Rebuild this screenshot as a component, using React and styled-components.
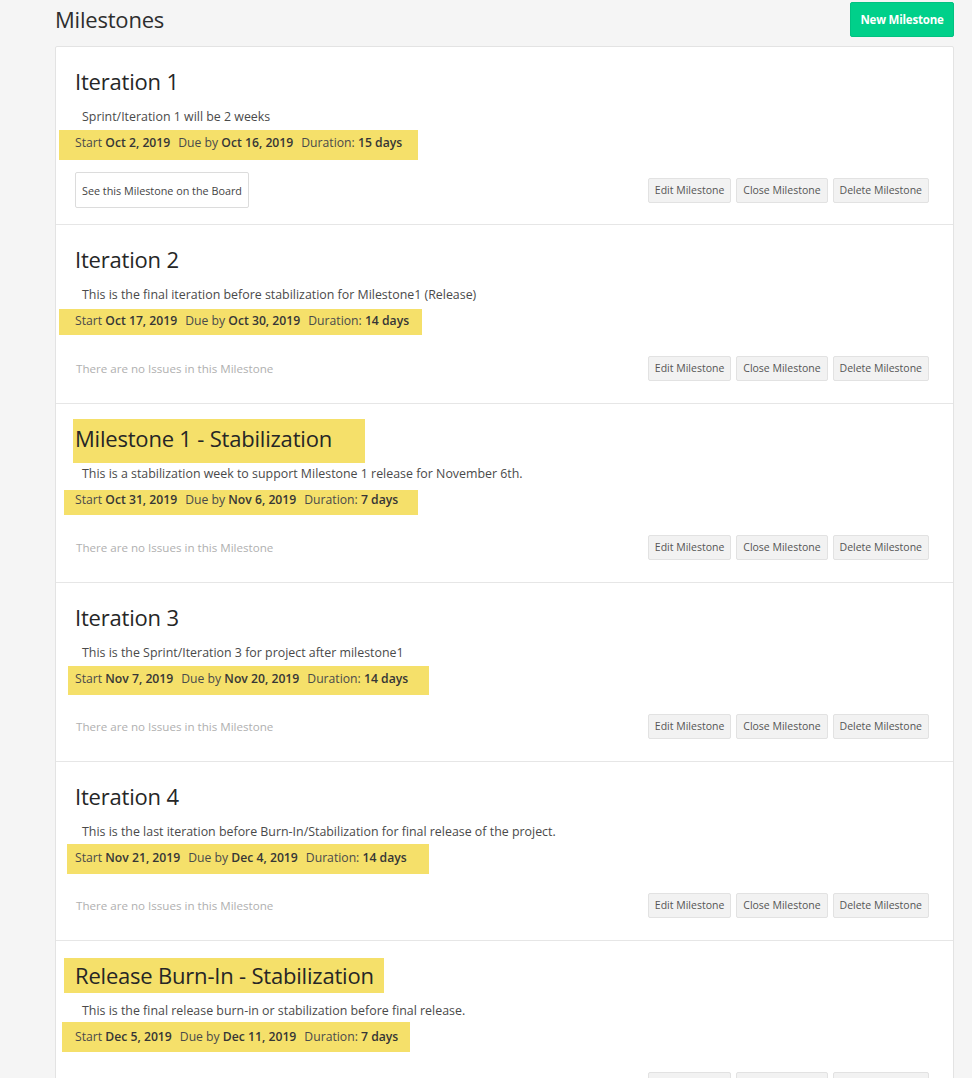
import styled, { createGlobalStyle } from 'styled-components';

const milestones = [
  {
    title: 'Iteration 1',
    desc: 'Sprint/Iteration 1 will be 2 weeks',
    start: 'Oct 2, 2019',
    due: 'Oct 16, 2019',
    duration: '15 days',
    hasBoard: true,
    dateMark: { t: 3, r: 16, b: 7, l: 16 },
  },
  {
    title: 'Iteration 2',
    desc: 'This is the final iteration before stabilization for Milestone1 (Release)',
    start: 'Oct 17, 2019',
    due: 'Oct 30, 2019',
    duration: '14 days',
    dateMark: { t: 2, r: 13, b: 4, l: 16 },
  },
  {
    title: 'Milestone 1 - Stabilization',
    desc: 'This is a stabilization week to support Milestone 1 release for November 6th.',
    start: 'Oct 31, 2019',
    due: 'Nov 6, 2019',
    duration: '7 days',
    titleMark: { t: 4, r: 33, b: 10, l: 2 },
    dateMark: { t: 0, r: 20, b: 5, l: 11 },
  },
  {
    title: 'Iteration 3',
    desc: 'This is the Sprint/Iteration 3 for project after milestone1',
    start: 'Nov 7, 2019',
    due: 'Nov 20, 2019',
    duration: '14 days',
    dateMark: { t: 3, r: 21, b: 6, l: 7 },
  },
  {
    title: 'Iteration 4',
    desc: 'This is the last iteration before Burn-In/Stabilization for final release of the project.',
    start: 'Nov 21, 2019',
    due: 'Dec 4, 2019',
    duration: '14 days',
    dateMark: { t: 4, r: 22, b: 6, l: 8 },
  },
  {
    title: 'Release Burn-In - Stabilization',
    desc: 'This is the final release burn-in or stabilization before final release.',
    start: 'Dec 5, 2019',
    due: 'Dec 11, 2019',
    duration: '7 days',
    titleMark: { t: 2, r: 10, b: 3, l: 11 },
    dateMark: { t: 5, r: 12, b: 5, l: 13 },
  },
];

export default function App() {
  return (
    <>
      <GlobalStyle />
      <Page>
        <Header>
          <PageTitle>Milestones</PageTitle>
          <NewButton>New Milestone</NewButton>
        </Header>
        <Card>
          {milestones.map((m) => (
            <Section key={m.title}>
              <Title>
                {m.titleMark ? <Mark $m={m.titleMark}>{m.title}</Mark> : m.title}
              </Title>
              <Description>{m.desc}</Description>
              <Dates>
                <Mark $m={m.dateMark}>
                  <DatePart>
                    Start <b>{m.start}</b>
                  </DatePart>
                  <DatePart>
                    Due by <b>{m.due}</b>
                  </DatePart>
                  <DatePart>
                    Duration: <b>{m.duration}</b>
                  </DatePart>
                </Mark>
              </Dates>
              <Footer>
                {m.hasBoard ? (
                  <BoardButton>See this Milestone on the Board</BoardButton>
                ) : (
                  <NoIssues>There are no Issues in this Milestone</NoIssues>
                )}
                <Actions>
                  <SmallButton>Edit Milestone</SmallButton>
                  <SmallButton>Close Milestone</SmallButton>
                  <SmallButton>Delete Milestone</SmallButton>
                </Actions>
              </Footer>
            </Section>
          ))}
        </Card>
      </Page>
    </>
  );
}

const GlobalStyle = createGlobalStyle`
  body {
    margin: 0;
    background: #f5f5f5;
    font-family: "Open Sans", "Noto Sans", sans-serif;
    color: #363636;
  }
`;

const Page = styled.div`
  width: 899px;
  margin-left: 55px;
`;

const Header = styled.div`
  display: flex;
  align-items: center;
  justify-content: space-between;
  height: 36px;
  padding-top: 1px;
  margin-bottom: 9px;
`;

const PageTitle = styled.h1`
  margin: 0;
  font-size: 22px;
  font-weight: 400;
  color: #2e2e2e;
  letter-spacing: -0.2px;
`;

const NewButton = styled.button`
  height: 35px;
  width: 104px;
  padding: 0;
  border: 1px solid #00c281;
  border-radius: 2px;
  background: #00d08a;
  color: #fff;
  font-family: inherit;
  font-size: 11.5px;
  font-weight: 700;
  letter-spacing: -0.2px;
`;

const Card = styled.div`
  background: #fff;
  border: 1px solid #e3e3e3;
  border-radius: 2px;
`;

const Section = styled.div`
  height: 179px;
  box-sizing: border-box;
  padding: 19px 24px 0 19px;
  border-bottom: 1px solid #e6e6e6;
  &:first-child {
    height: 178px;
  }
`;

const Mark = styled.span`
  display: inline-block;
  background: #f5e06a;
  margin: ${({ $m }) => `-${$m.t}px -${$m.r}px -${$m.b}px -${$m.l}px`};
  padding: ${({ $m }) => `${$m.t}px ${$m.r}px ${$m.b}px ${$m.l}px`};
`;

const Title = styled.h2`
  margin: 0;
  font-size: 22px;
  line-height: 30px;
  font-weight: 400;
  color: #262626;
  letter-spacing: -0.2px;
`;

const Description = styled.p`
  margin: 11px 0 0 7px;
  font-size: 12.4px;
  line-height: 20px;
  color: #4a4a4a;
`;

const Dates = styled.div`
  margin-top: 6px;
  font-size: 12.2px;
  line-height: 20px;
  color: #4a4a4a;
  b {
    font-weight: 600;
    color: #363636;
  }
`;

const DatePart = styled.span`
  margin-right: 8px;
  &:last-child {
    margin-right: 0;
  }
`;

const Footer = styled.div`
  display: flex;
  align-items: center;
  justify-content: space-between;
  height: 36px;
  margin-top: 19px;
`;

const BoardButton = styled.button`
  height: 36px;
  padding: 0 6px;
  border: 1px solid #dcdcdc;
  border-radius: 2px;
  background: #fff;
  color: #444;
  font-family: inherit;
  font-size: 10.8px;
`;

const NoIssues = styled.span`
  margin-left: 1px;
  font-size: 11.6px;
  color: #b0b0b0;
`;

const Actions = styled.div`
  display: flex;
  gap: 5px;
`;

const SmallButton = styled.button`
  height: 25px;
  padding: 0 6px;
  border: 1px solid #e2e2e2;
  border-radius: 2px;
  background: #f2f2f2;
  color: #555;
  font-family: inherit;
  font-size: 10.5px;
`;
